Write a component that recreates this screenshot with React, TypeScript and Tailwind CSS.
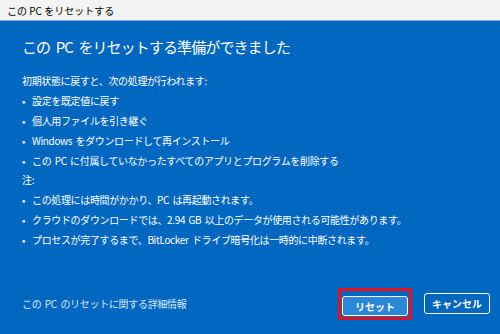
const font = {
  fontFamily: '"Noto Sans CJK JP", "Noto Sans", sans-serif',
};

const steps = [
  "設定を既定値に戻す",
  "個人用ファイルを引き継ぐ",
  "Windows をダウンロードして再インストール",
  "この PC に付属していなかったすべてのアプリとプログラムを削除する",
];

const notes = [
  "この処理には時間がかかり、PC は再起動されます。",
  "クラウドのダウンロードでは、2.94 GB 以上のデータが使用される可能性があります。",
  "プロセスが完了するまで、BitLocker ドライブ暗号化は一時的に中断されます。",
];

function BulletList({ items }: { items: string[] }) {
  return (
    <ul className="flex flex-col">
      {items.map((item) => (
        <li key={item} className="flex h-5 items-center">
          <span className="w-[10px] text-[10px]">•</span>
          <span>{item}</span>
        </li>
      ))}
    </ul>
  );
}

export default function App() {
  return (
    <div
      className="flex h-[334px] w-[500px] flex-col overflow-hidden bg-[#0067c0] text-white"
      style={font}
    >
      <div className="flex h-[21px] shrink-0 items-center border-b border-[#7fb2e3] bg-[#f3f3f3] pl-[7px] text-[10px] text-black">
        この PC をリセットする
      </div>

      <div className="flex flex-1 flex-col px-[22px]">
        <h1 className="mt-[14px] text-[15px] leading-6 font-normal tracking-[-0.9px] [word-spacing:3px]">
          この PC をリセットする準備ができました
        </h1>

        <div className="mt-[11px] text-[10px] tracking-[-0.35px] [word-spacing:1.5px]">
          <p className="flex h-5 items-center">初期状態に戻すと、次の処理が行われます:</p>
          <BulletList items={steps} />
          <p className="-mt-[1px] flex h-5 items-center">注:</p>
          <BulletList items={notes} />
        </div>

        <div className="mt-auto mb-[14px] flex items-center justify-between">
          <a className="text-[10px] tracking-[-0.3px] text-[#d5e7f8] [word-spacing:1.5px]">
            この PC のリセットに関する詳細情報
          </a>
          <div className="mr-[-12px] flex items-center gap-[12px]">
            <div className="rounded-[2px] border-[3px] border-[#e8101a] p-[1px]">
              <button
                type="button"
                className="h-[20px] w-[66px] rounded-[3px] border border-white bg-[#2b88d8] text-[10px] font-bold"
              >
                リセット
              </button>
            </div>
            <button
              type="button"
              className="h-[21px] w-[66px] rounded-[3px] border border-white bg-[#0067c0] text-[10px] font-bold"
            >
              キャンセル
            </button>
          </div>
        </div>
      </div>
    </div>
  );
}
